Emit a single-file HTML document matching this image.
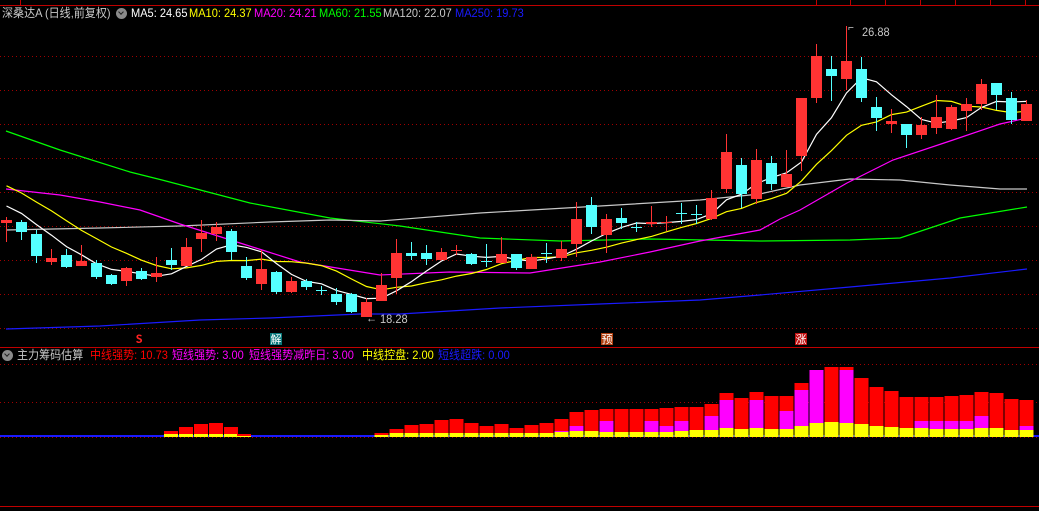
<!DOCTYPE html>
<html><head><meta charset="utf-8"><style>
html,body{margin:0;padding:0;background:#000;width:1039px;height:511px;overflow:hidden}
svg{position:absolute;left:0;top:0}
.t{position:absolute;font:12px "Liberation Sans","Noto Sans CJK SC",sans-serif;white-space:pre;line-height:14px;transform:scaleX(0.92);transform-origin:0 0}
.ic{position:absolute;width:11px;height:11px;border-radius:50%;background:#8a8a8a}
.ic:after{content:"";position:absolute;left:3px;top:2px;width:3px;height:3px;border-right:1.5px solid #222;border-bottom:1.5px solid #222;transform:rotate(45deg)}
.mk{position:absolute;font:11px "Noto Sans CJK SC",sans-serif;line-height:12px;width:12px;height:12px;text-align:center;color:#fff}
</style></head><body>
<svg id="s" width="1039" height="511" xmlns="http://www.w3.org/2000/svg"></svg>
<div class="t" style="left:2px;top:6px;color:#c8c8c8">深桑达A (日线,前复权)</div>
<div class="ic" style="left:116px;top:8px"></div>
<div class="t" style="left:131px;top:6px;color:#fff">MA5: 24.65</div>
<div class="t" style="left:189px;top:6px;color:#ff0">MA10: 24.37</div>
<div class="t" style="left:254px;top:6px;color:#f0f">MA20: 24.21</div>
<div class="t" style="left:319px;top:6px;color:#0f0">MA60: 21.55</div>
<div class="t" style="left:383px;top:6px;color:#c8c8c8">MA120: 22.07</div>
<div class="t" style="left:455px;top:6px;color:#1a1aff">MA250: 19.73</div>
<div class="ic" style="left:2px;top:350px"></div>
<div class="t" style="left:17px;top:348px;color:#c8c8c8">主力筹码估算</div>
<div class="t" style="left:90px;top:348px;color:#f00">中线强势: 10.73</div>
<div class="t" style="left:172px;top:348px;color:#f0f">短线强势: 3.00</div>
<div class="t" style="left:249px;top:348px;color:#f0f">短线强势减昨日: 3.00</div>
<div class="t" style="left:362px;top:348px;color:#ff0">中线控盘: 2.00</div>
<div class="t" style="left:438px;top:348px;color:#1a1aff">短线超跌: 0.00</div>
<div class="t" style="left:862px;top:25px;color:#c8c8c8">26.88</div>
<div class="t" style="left:380px;top:312px;color:#c8c8c8">18.28</div>
<div class="t" style="left:366px;top:311px;color:#c8c8c8">←</div>
<div class="t" style="left:848px;top:21px;color:#c8c8c8;font-size:11px">⌐</div>
<div class="mk" style="left:133px;top:333px;color:#f22;font-weight:bold">S</div>
<div class="mk" style="left:270px;top:333px;background:#08787a">解</div>
<div class="mk" style="left:601px;top:333px;background:#b04010">预</div>
<div class="mk" style="left:795px;top:333px;background:#c01010">涨</div>
<script>
var S=document.getElementById('s'),h='';
function L(x1,y1,x2,y2,c,w,d){h+='<line x1="'+x1+'" y1="'+y1+'" x2="'+x2+'" y2="'+y2+'" stroke="'+c+'" stroke-width="'+(w||1)+'"'+(d?' stroke-dasharray="'+d+'"':'')+'/>';}
function R(x,y,w,hh,c){if(hh<=0)return;h+='<rect x="'+x+'" y="'+y+'" width="'+w+'" height="'+hh+'" fill="'+c+'"/>';}
function P(pts,c){h+='<polyline fill="none" stroke="'+c+'" stroke-width="1.2" points="'+pts.map(function(p){return p.join(',')}).join(' ')+'"/>';}
L(0,5.5,1039,5.5,'#c00000',1);
[20,816,850,885,920,955,990,1025].forEach(function(x){L(x+.5,0,x+.5,5,'#c00000');});
L(0,347.5,1039,347.5,'#c00000',1);
L(0,506.5,1039,506.5,'#c00000',1);
L(0,364.5,1039,364.5,'#a00000',1,'1 3');
for(var y=56;y<=328;y+=34)L(0,y+.5,1039,y+.5,'#a00000',1,'1 3');
[402,437].forEach(function(y){L(0,y+.5,1039,y+.5,'#a00000',1,'1 3');});
var C=[[1,220,223,217,242],[0,222,232,220,240],[0,234,256,230,263],[1,258,262,249,265],[0,255,267,249,268],[1,261,266,245,266],[0,263,277,260,279],[0,275,284,274,285],[1,268,281,267,286],[0,271,279,268,280],[1,273,277,257,282],[0,260,265,248,270],[1,247,266,238,266],[1,233,239,220,252],[1,227,234,222,241],[0,231,252,229,260],[0,266,278,257,280],[1,269,284,250,290],[0,272,292,271,294],[1,281,292,277,293],[0,281,287,279,290],[0,290,290,286,295],[0,294,302,288,305],[0,294,312,293,313],[1,302,317,298,317],[1,285,301,273,301],[1,253,278,239,294],[0,253,256,242,260],[0,253,259,245,265],[1,252,260,248,260],[1,250,250,245,255],[0,254,264,253,265],[0,261,262,244,267],[1,254,263,237,263],[0,254,268,254,270],[1,257,269,254,269],[0,253,253,243,263],[1,249,258,241,261],[1,219,244,202,257],[0,205,227,197,234],[1,219,235,214,253],[0,218,223,208,229],[0,227,227,222,232],[1,222,224,206,227],[1,222,222,216,231],[0,213,213,203,224],[0,214,214,205,224],[1,198,219,190,220],[1,152,189,134,193],[0,165,194,158,208],[1,160,199,149,204],[0,163,184,156,190],[1,174,187,150,187],[1,98,156,98,171],[1,56,98,44,103],[0,69,76,56,101],[1,61,79,26,90],[0,69,98,57,102],[0,107,118,97,131],[1,121,124,109,133],[0,124,135,124,148],[1,125,135,117,139],[1,117,128,95,134],[1,107,129,105,130],[1,104,111,98,131],[1,84,104,79,110],[0,83,95,83,110],[0,98,120,92,124],[1,104,121,100,121]];
var closes=[160,165,170,168,165,195,200,205,210];
C.forEach(function(c){closes.push(c[0]?c[1]:c[2]);});
function ma(n){var o=[];for(var i=0;i<C.length;i++){var k=i+9,s=0,m=0;for(var j=k;j>k-n&&j>=0;j--){s+=closes[j];m++;}o.push([6.5+15*i,(s/m).toFixed(1)]);}return o;}
P([[6,329],[100,326],[200,320],[270,318],[360,314],[400,314],[500,308],[600,304],[700,300],[760,295],[850,287],[950,278],[1027,269]],'#1a1aff');
P([[6,131],[60,150],[130,172],[162,180],[250,203],[330,218],[400,226],[480,238],[560,241],[650,239],[760,241],[850,240],[900,238],[960,218],[1027,207]],'#00ff00');
P([[6,230],[100,228],[180,226],[270,222],[330,220],[380,221],[480,213],[600,206],[700,200],[760,194],[800,185],[850,179],[900,180],[950,185],[1000,189],[1027,189]],'#c8c8c8');
P([[6,189],[60,195],[100,202],[140,210],[180,224],[240,243],[300,262],[380,275],[450,272],[530,273],[600,262],[650,252],[700,241],[760,230],[780,219],[800,210],[847,183],[893,160],[953,140],[1000,124],[1027,118]],'#ff00ff');
P(ma(10),'#ffff00');P(ma(5),'#ffffff');
C.forEach(function(c,i){var x=6.5+15*i,col=c[0]?'#ff3333':'#54ffff';
L(x,c[3],x,c[4],col,1);
if(c[2]-c[1]<1)L(x-5.5,c[1]+.5,x+5.5,c[1]+.5,col,1);else R(x-5.5,c[1],11,c[2]-c[1],col);});
L(0,436,1039,436,'#1a1aff',2);
var hump=[[171,431,434],[186,427,434],[201,424,434],[216,423,434],[231,427,434],[244,434,436]];
hump.forEach(function(b){R(b[0]-7,b[1],14,437-b[1],'#ff0000');R(b[0]-7,b[2],14,437-b[2],'#ffff00');});
var red=[433,429,425,424,420,419,423,426,424,428,425,423,419,412,410,409,409,409,409,408,407,407,404,393,398,392,396,396,383,370,367,367,378,387,391,397,397,397,396,395,392,393,399,400];
var mag=[0,0,0,0,0,0,0,0,0,0,0,0,431,426,0,421,0,0,421,426,421,0,416,400,0,400,0,411,390,370,0,370,0,0,0,0,421,421,421,421,416,0,0,426];
var yel=[435,433,433,433,433,433,433,433,433,433,433,433,432,431,431,432,432,432,432,432,431,430,430,428,429,428,429,429,426,423,422,423,424,426,427,428,428,429,429,429,428,428,430,430];
red.forEach(function(r,k){var x=6.5+15*(k+25)-7;R(x,r,14,437-r,'#ff0000');if(mag[k])R(x,mag[k],14,437-mag[k],'#ff00ff');R(x,yel[k],14,437-yel[k],'#ffff00');});
S.innerHTML=h;
</script>
</body></html>
